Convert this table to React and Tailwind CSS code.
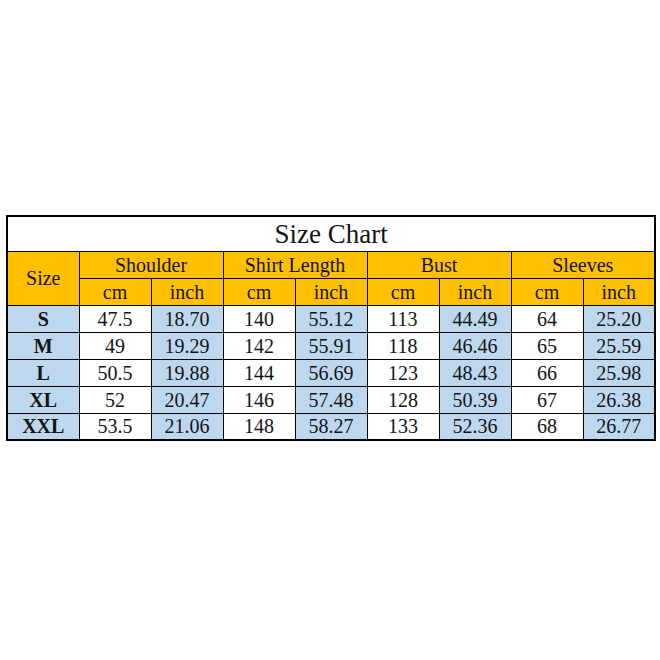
import { Fragment } from "react";

const groups = ["Shoulder", "Shirt Length", "Bust", "Sleeves"];

const rows = [
  ["S", "47.5", "18.70", "140", "55.12", "113", "44.49", "64", "25.20"],
  ["M", "49", "19.29", "142", "55.91", "118", "46.46", "65", "25.59"],
  ["L", "50.5", "19.88", "144", "56.69", "123", "48.43", "66", "25.98"],
  ["XL", "52", "20.47", "146", "57.48", "128", "50.39", "67", "26.38"],
  ["XXL", "53.5", "21.06", "148", "58.27", "133", "52.36", "68", "26.77"],
];

export default function App() {
  return (
    <div className="min-h-[660px] w-[660px] bg-white pt-[215px] pl-[6px] font-[family-name:'Liberation_Serif',serif] text-[#141414]">
      <table className="w-[648px] table-fixed border-collapse border-2 border-black text-center font-[family-name:'Liberation_Serif',serif]">
        <colgroup>
          {Array.from({ length: 9 }).map((_, i) => (
            <col key={i} className="w-[72px]" />
          ))}
        </colgroup>
        <thead>
          <tr className="h-[35px]">
            <th colSpan={9} className="border border-black bg-white pt-[2px] text-[27px] font-normal leading-none">
              Size Chart
            </th>
          </tr>
          <tr className="h-[27px] bg-[#ffc000]">
            <th rowSpan={2} className="border border-black text-[20px] font-normal leading-none">
              Size
            </th>
            {groups.map((g) => (
              <th key={g} colSpan={2} className="border border-black text-[20px] font-normal leading-none">
                {g}
              </th>
            ))}
          </tr>
          <tr className="h-[27px] bg-[#ffc000]">
            {groups.map((g) => (
              <Fragment key={g}>
                <th className="border border-black text-[20px] font-normal leading-none">cm</th>
                <th className="border border-black text-[20px] font-normal leading-none">inch</th>
              </Fragment>
            ))}
          </tr>
        </thead>
        <tbody>
          {rows.map((r) => (
            <tr key={r[0]} className="h-[27px]">
              {r.map((v, i) => (
                <td
                  key={i}
                  className={
                    "border border-black text-[20px] leading-none " +
                    (i === 0 ? "bg-[#bdd7ee] font-bold" : i % 2 === 0 ? "bg-[#bdd7ee]" : "bg-white")
                  }
                >
                  {v}
                </td>
              ))}
            </tr>
          ))}
        </tbody>
      </table>
    </div>
  );
}
